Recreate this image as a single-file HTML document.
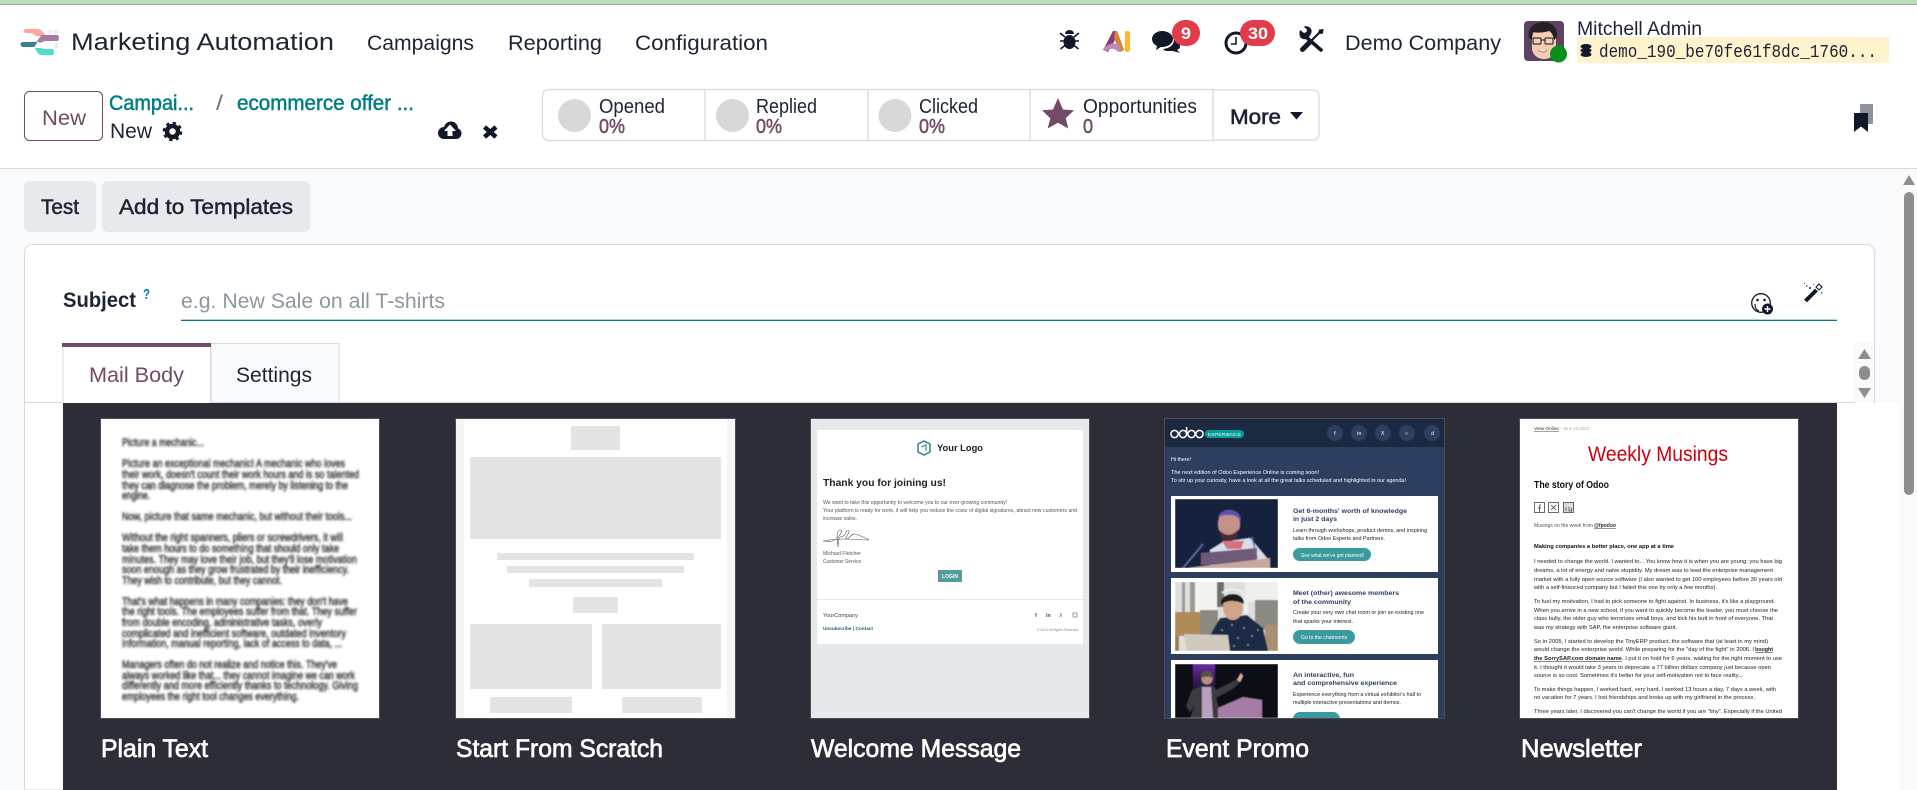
<!DOCTYPE html>
<html lang="en"><head><meta charset="utf-8"><title>Marketing Automation</title>
<style>
html,body{margin:0;padding:0;width:1917px;height:790px;overflow:hidden;background:#f9fafb}
svg{display:block}
text{font-family:"Liberation Sans",sans-serif;fill:#1d2433;white-space:pre}
.n{font-size:21.5px}
.sb{stroke:#1d2433;stroke-width:.5}
.lab{font-size:25px;fill:#fff;stroke:#fff;stroke-width:.7}
.p{fill:#714B67}
.tl{fill:#017E84;stroke:#017E84;stroke-width:.5;font-size:21px}
.stl{font-size:20px}
.stv{font-size:20px;fill:#714B67;stroke:#714B67;stroke-width:.5}
.pt{font-size:11px;fill:#2a2a2a;stroke:#2a2a2a;stroke-width:.4}
.w{font-size:5px;fill:#555}
.e{font-size:5px;fill:#fff}
.c{font-size:5px;fill:#222}
.h{font-size:6px;fill:#2d3e5e;font-weight:700}
.m{font-size:5.3px;fill:#222}
</style></head><body>
<svg xmlns="http://www.w3.org/2000/svg" width="1917" height="790" viewBox="0 0 1917 790">
<defs>
<filter id="b1" x="-5%" y="-5%" width="110%" height="110%"><feGaussianBlur stdDeviation="1.1"/></filter>
<filter id="b2" x="-5%" y="-5%" width="110%" height="110%"><feGaussianBlur stdDeviation="0.35"/></filter>
<filter id="b3" x="-5%" y="-5%" width="110%" height="110%"><feGaussianBlur stdDeviation="0.6"/></filter>
<clipPath id="c3"><rect x="811" y="419" width="278" height="299"/></clipPath>
<clipPath id="c4"><rect x="1165" y="419" width="279" height="299"/></clipPath>
<clipPath id="c5"><rect x="1520" y="419" width="278" height="299"/></clipPath>
<clipPath id="pa"><rect x="1175" y="499" width="103" height="69"/></clipPath>
<clipPath id="pb"><rect x="1175" y="582" width="103" height="69"/></clipPath>
<clipPath id="pc"><rect x="1175" y="664" width="103" height="54"/></clipPath>
<linearGradient id="beam" x1="0" y1="0" x2="0" y2="1"><stop offset="0" stop-color="#6b2fa0"/><stop offset="1" stop-color="#0a0718"/></linearGradient>
</defs>

<!-- page / header -->
<rect width="1917" height="790" fill="#f9fafb"/>
<rect width="1917" height="168" fill="#fff"/>
<rect width="1917" height="4" fill="#bfdcbf"/>
<rect y="4" width="1917" height="1" fill="#8fb096"/>
<rect y="168" width="1917" height="1" fill="#d8dadd"/>

<!-- logo -->
<g fill="#eee"><rect x="48" y="30" width="4" height="4"/><rect x="54" y="30" width="4" height="4"/><rect x="54" y="44" width="4" height="4"/><rect x="54" y="37" width="4" height="4" fill="#e8e0e8"/></g>
<path d="M25 29h12q4 0 6 3l3 4h-8q-3 0-5-2l-1-1H25q-2-2 0-4z" fill="#ffa4a6"/>
<path d="M42 35h16q2 3 0 6H45l-5 2-3-2 3-4q1-2 2-2z" fill="#a97ca6"/>
<path d="M22 42h12q3 0 4-1l-3 5-1 1H22q-3-3 0-5z" fill="#38809a"/>
<path d="M35 48h6l2 1h10q2 3 0 6H42q-3 0-5-3z" fill="#4fdcc8"/>

<!-- navbar -->
<text x="71" y="50" style="font-size:24.5px" textLength="263" lengthAdjust="spacingAndGlyphs">Marketing Automation</text>
<text x="367" y="50" class="n" textLength="107" lengthAdjust="spacingAndGlyphs">Campaigns</text>
<text x="508" y="50" class="n" textLength="94" lengthAdjust="spacingAndGlyphs">Reporting</text>
<text x="635" y="50" class="n" textLength="133" lengthAdjust="spacingAndGlyphs">Configuration</text>

<!-- bug -->
<g fill="#111827" stroke="#111827">
<ellipse cx="1069.5" cy="42" rx="6" ry="7" stroke="none"/><path d="M1065 34a4.5 4 0 0 1 9 0z" stroke="none"/>
<path d="M1060 33l5 4M1079 33l-5 4M1060 41h4M1079 41h-4M1060.5 49l5-4M1078.5 49l-5-4" fill="none" stroke-width="1.6"/>
</g>
<!-- AI -->
<path d="M1113 31h4l7 19-4 2-5-12-7 12-5-2z" fill="#8b3a7a"/>
<path d="M1115 31h2l7 19-4 2-6-14z" fill="#d8862c"/>
<path d="M1104 51q-1-3 2-5 8-5 14 0l1 5-3 1q-5-6-11-1z" fill="#bb8ab8"/>
<rect x="1125" y="31" width="5" height="21" rx="2" fill="#ffb932"/>
<!-- chat -->
<path d="M1162 31c6 0 11 3.5 11 8s-5 8-11 8l-1 0-5 3 1-4c-3-1.5-5-4-5-7 0-4.5 4.5-8 10-8z" fill="#111827"/>
<path d="M1174 40c4 1 6 3 6 6 0 2-1 3-3 4l3 3-7-2-6 0c-2 0-3-1-4-2 6-.5 11-4 11-9z" fill="#111827"/>
<rect x="1172" y="20" width="28" height="26" rx="13" fill="#e23b4a"/>
<text x="1181" y="39" style="font-size:17px;font-weight:700;fill:#fff" textLength="10" lengthAdjust="spacingAndGlyphs">9</text>
<!-- clock -->
<circle cx="1236" cy="43" r="10" fill="none" stroke="#111827" stroke-width="3"/>
<path d="M1236 37v7h-5" fill="none" stroke="#111827" stroke-width="1.6"/>
<rect x="1240" y="20" width="35" height="26" rx="13" fill="#e23b4a"/>
<text x="1248" y="39" style="font-size:17px;font-weight:700;fill:#fff" textLength="20" lengthAdjust="spacingAndGlyphs">30</text>
<!-- tools: wrench + screwdriver -->
<g fill="#111827" stroke="#111827">
<path d="M1306 37l15 13" fill="none" stroke-width="3.6" stroke-linecap="round"/>
<path d="M1300 30l4 3 2.500-1 .5-2.500-3.500-3c4-1 7 .5 8 3.500.5 2-.5 4-1.500 5.500l-2.500 3c-2 1-4.500 1-6.500-.5-1.500-1.500-2-4.500-1-8z" stroke="none"/>
<path d="M1321 31l-10 10" fill="none" stroke-width="2.200"/>
<path d="M1319 29.500l4.500-.5-.5 4.500-2.500.5-2-2z" stroke="none"/>
<path d="M1310 42l-7.500 7.500" fill="none" stroke-width="5" stroke-linecap="round"/>
</g>
<text x="1345" y="50" class="n" textLength="156" lengthAdjust="spacingAndGlyphs">Demo Company</text>

<!-- avatar -->
<rect x="1524" y="21" width="40" height="40" rx="4" fill="#5e4360"/>
<path d="M1532 40c0-10 6-14 12-14s12 4 12 14v8c0 7-6 11-12 11s-12-4-12-11z" fill="#f2cdb0"/>
<path d="M1529 38c-2-9 4-16 14-16 9 0 15 5 14 15l-3 3c-1-6-3-8-5-9-6 2-13 2-16 1-1 2-1 5-1 8z" fill="#272126"/>
<g fill="none" stroke="#3b3335" stroke-width="1.2"><rect x="1533" y="38" width="8" height="6" rx="1"/><rect x="1545" y="38" width="8" height="6" rx="1"/><path d="M1541 40h4"/></g>
<path d="M1538 50q5 4 9 0" fill="#fff" stroke="#8a4a4a" stroke-width=".8"/>
<circle cx="1558.5" cy="54" r="8.5" fill="#058f1d"/>
<text x="1577" y="35" style="font-size:19.5px" textLength="125" lengthAdjust="spacingAndGlyphs">Mitchell Admin</text>
<rect x="1577" y="37" width="312" height="26" fill="#fff3cd"/>
<g fill="#111827"><ellipse cx="1586" cy="46.5" rx="5.5" ry="2.500"/><ellipse cx="1586" cy="50.5" rx="5.5" ry="2.500"/><ellipse cx="1586" cy="54.5" rx="5.5" ry="2.500"/></g>
<text x="1599" y="57" style="font-family:'Liberation Mono',monospace;font-size:18.5px" textLength="278" lengthAdjust="spacingAndGlyphs">demo_190_be70fe61f8dc_1760...</text>

<!-- control panel -->
<rect x="24.5" y="91.5" width="78" height="49" rx="5" fill="#fff" stroke="#714B67"/>
<text x="42" y="125" class="n p" textLength="44" lengthAdjust="spacingAndGlyphs">New</text>
<text x="109" y="110" class="tl" textLength="85" lengthAdjust="spacingAndGlyphs">Campai...</text>
<text x="216" y="110" style="font-size:21px;fill:#6b7280" textLength="7" lengthAdjust="spacingAndGlyphs">/</text>
<text x="237" y="110" class="tl" textLength="177" lengthAdjust="spacingAndGlyphs">ecommerce offer ...</text>
<text x="110" y="138" class="n" textLength="42" lengthAdjust="spacingAndGlyphs">New</text>
<circle cx="172.5" cy="131.5" r="5.5" fill="none" stroke="#111827" stroke-width="4.5"/>
<circle cx="172.5" cy="131.5" r="8.7" fill="none" stroke="#111827" stroke-width="2.2" stroke-dasharray="3.300 3.530"/>
<g fill="#111827"><circle cx="444" cy="133" r="6"/><circle cx="451" cy="128.5" r="7"/><circle cx="456" cy="133.5" r="5.5"/><rect x="444" y="131" width="12" height="8"/></g>
<path d="M450 124.5l6 6.5h-3.500v5h-5v-5H444z" fill="#fff"/>
<path d="M484.5 127l11.5 10M496 127l-11.500 10" stroke="#111827" stroke-width="4.5" fill="none"/>

<path d="M1213 90h100a6 6 0 0 1 6 6v38a6 6 0 0 1-6 6h-100z" fill="#fff" stroke="#d8dadd" stroke-width="1.3"/>
<path d="M1213 89.5H548.5a6 6 0 0 0-6 6v39a6 6 0 0 0 6 6H1213z" fill="#fff" stroke="#d8dadd" stroke-width="1.3"/>
<path d="M705 90v50M868 90v50M1030 90v50" stroke="#d8dadd" stroke-width="1.3" fill="none"/>
<g fill="#d8d8d8"><circle cx="574.5" cy="115.5" r="16.5"/><circle cx="732.5" cy="115.5" r="16.5"/><circle cx="895" cy="115.5" r="16.5"/></g>
<text x="599" y="113" class="stl" textLength="66" lengthAdjust="spacingAndGlyphs">Opened</text>
<text x="599" y="133" class="stv" textLength="26" lengthAdjust="spacingAndGlyphs">0%</text>
<text x="756" y="113" class="stl" textLength="61" lengthAdjust="spacingAndGlyphs">Replied</text>
<text x="756" y="133" class="stv" textLength="26" lengthAdjust="spacingAndGlyphs">0%</text>
<text x="919" y="113" class="stl" textLength="59" lengthAdjust="spacingAndGlyphs">Clicked</text>
<text x="919" y="133" class="stv" textLength="26" lengthAdjust="spacingAndGlyphs">0%</text>
<path d="M1058 98l5 11.5 11 .8-8.300 8 2.600 10.200-10.300-5.800-10.300 5.800 2.600-10.200-8.300-8 11-.8z" fill="#714B67"/>
<text x="1083" y="113" class="stl" textLength="114" lengthAdjust="spacingAndGlyphs">Opportunities</text>
<text x="1083" y="133" class="stv" textLength="10" lengthAdjust="spacingAndGlyphs">0</text>
<text x="1230" y="124" class="n sb" textLength="51" lengthAdjust="spacingAndGlyphs" style="stroke-width:.6">More</text>
<path d="M1290 112h13l-6.500 7.500z" fill="#111827"/>
<path d="M1860 104h13v20h-5v-11h-8z" fill="#8e9299"/>
<path d="M1854 113h14v19l-7-5.500-7 5.500z" fill="#111827"/>

<!-- action buttons -->
<rect x="24" y="181" width="72" height="51" rx="6" fill="#e7e9ed"/>
<text x="41" y="214" class="n sb" textLength="38" lengthAdjust="spacingAndGlyphs">Test</text>
<rect x="102" y="181" width="208" height="51" rx="6" fill="#e7e9ed"/>
<text x="119" y="214" class="n sb" textLength="174" lengthAdjust="spacingAndGlyphs">Add to Templates</text>

<!-- card -->
<path d="M24.5 790V252.5a8 8 0 0 1 8-8H1866.500a8 8 0 0 1 8 8V790z" fill="#fff" stroke="#d8dadd"/>
<text x="63" y="307" class="n" textLength="73" lengthAdjust="spacingAndGlyphs" style="font-weight:700">Subject</text>
<text x="143" y="299" style="font-size:15px;font-weight:700;fill:#0180a5" textLength="7" lengthAdjust="spacingAndGlyphs">?</text>
<text x="181" y="308" style="font-size:21.5px;fill:#8f969e" textLength="264" lengthAdjust="spacingAndGlyphs">e.g. New Sale on all T-shirts</text>
<rect x="181" y="319.7" width="1656" height="1.300" fill="#0b7a78"/>

<!-- emoji + wand -->
<circle cx="1761" cy="303" r="9.3" fill="#fff" stroke="#111827" stroke-width="1.3"/>
<circle cx="1757.5" cy="300" r="1.3" fill="#111827"/><circle cx="1764.5" cy="300" r="1.3" fill="#111827"/>
<path d="M1755 304q0 6 4 7" fill="none" stroke="#111827" stroke-width="1.2"/>
<circle cx="1767.5" cy="309" r="5.5" fill="#111827"/><path d="M1764.5 309h6M1767.5 306v6" stroke="#fff" stroke-width="1.4"/>
<path d="M1805.5 301l11-11" stroke="#111827" stroke-width="4"/><path d="M1816.5 290l4-4" stroke="#fff" stroke-width="2.6"/><path d="M1816 287l3-3 3 3-3 3z" fill="none" stroke="#111827" stroke-width="1.1"/>
<g fill="#1b6fa5"><rect x="1806" y="285" width="1.5" height="1.5"/><rect x="1809" y="287" width="2" height="2"/><rect x="1804" y="283" width="1" height="1"/><rect x="1821" y="292" width="1.5" height="1.5"/><rect x="1813" y="284" width="1" height="1"/></g>

<!-- tabs -->
<rect x="25" y="402" width="1830" height="1" fill="#d8dadd"/>
<rect x="211" y="343.5" width="128" height="59" fill="#f9fafb" stroke="#d8dadd"/>
<rect x="63" y="344" width="147.5" height="59" fill="#fff" stroke="#d8dadd"/>
<rect x="64" y="400" width="146" height="4" fill="#fff"/>
<rect x="62" y="343" width="149" height="4" fill="#714B67"/>
<text x="89" y="382" class="n p" textLength="95" lengthAdjust="spacingAndGlyphs">Mail Body</text>
<text x="236" y="382" class="n" textLength="76" lengthAdjust="spacingAndGlyphs">Settings</text>

<!-- white area right of the panel + inner scrollbar -->
<rect x="1837" y="403" width="63" height="387" fill="#fff"/>
<rect x="1855" y="343" width="19" height="60" fill="#fafafa"/>
<path d="M1858 359l6.5-10 6.500 10z" fill="#8e8e8e"/>
<rect x="1859" y="366" width="11" height="14" rx="5.5" fill="#8e8e8e"/>
<path d="M1858 388l6.5 10 6.500-10z" fill="#8e8e8e"/>

<!-- dark panel -->
<rect x="63" y="403" width="1774" height="387" fill="#2c2d36"/>

<!-- Thumb 1 -->
<rect x="101" y="419" width="278" height="299" fill="#fff"/>
<g filter="url(#b1)">
<text x="122" y="446" class="pt" textLength="82" lengthAdjust="spacingAndGlyphs">Picture a mechanic...</text>
<text x="122" y="467" class="pt" textLength="223" lengthAdjust="spacingAndGlyphs">Picture an exceptional mechanic! A mechanic who loves</text>
<text x="122" y="478" class="pt" textLength="237" lengthAdjust="spacingAndGlyphs">their work, doesn't count their work hours and is so talented</text>
<text x="122" y="489" class="pt" textLength="226" lengthAdjust="spacingAndGlyphs">they can diagnose the problem, merely by listening to the</text>
<text x="122" y="499" class="pt" textLength="28" lengthAdjust="spacingAndGlyphs">engine.</text>
<text x="122" y="520" class="pt" textLength="230" lengthAdjust="spacingAndGlyphs">Now, picture that same mechanic, but without their tools...</text>
<text x="122" y="541" class="pt" textLength="221" lengthAdjust="spacingAndGlyphs">Without the right spanners, pliers or screwdrivers, it will</text>
<text x="122" y="552" class="pt" textLength="217" lengthAdjust="spacingAndGlyphs">take them hours to do something that should only take</text>
<text x="122" y="563" class="pt" textLength="235" lengthAdjust="spacingAndGlyphs">minutes. They may love their job, but they'll lose motivation</text>
<text x="122" y="573" class="pt" textLength="227" lengthAdjust="spacingAndGlyphs">soon enough as they grow frustrated by their inefficiency.</text>
<text x="122" y="584" class="pt" textLength="160" lengthAdjust="spacingAndGlyphs">They wish to contribute, but they cannot.</text>
<text x="122" y="605" class="pt" textLength="226" lengthAdjust="spacingAndGlyphs">That's what happens in many companies: they don't have</text>
<text x="122" y="615" class="pt" textLength="235" lengthAdjust="spacingAndGlyphs">the right tools. The employees suffer from that. They suffer</text>
<text x="122" y="626" class="pt" textLength="200" lengthAdjust="spacingAndGlyphs">from double encoding, administrative tasks, overly</text>
<text x="122" y="637" class="pt" textLength="224" lengthAdjust="spacingAndGlyphs">complicated and inefficient software, outdated inventory</text>
<text x="122" y="647" class="pt" textLength="220" lengthAdjust="spacingAndGlyphs">information, manual reporting, lack of access to data, ...</text>
<text x="122" y="668" class="pt" textLength="215" lengthAdjust="spacingAndGlyphs">Managers often do not realize and notice this. They've</text>
<text x="122" y="679" class="pt" textLength="233" lengthAdjust="spacingAndGlyphs">always worked like that... they cannot imagine we can work</text>
<text x="122" y="689" class="pt" textLength="236" lengthAdjust="spacingAndGlyphs">differently and more efficiently thanks to technology. Giving</text>
<text x="122" y="700" class="pt" textLength="177" lengthAdjust="spacingAndGlyphs">employees the right tool changes everything.</text>
</g>
<text x="101" y="757" class="lab" textLength="107" lengthAdjust="spacingAndGlyphs">Plain Text</text>

<!-- Thumb 2 -->
<rect x="456" y="419" width="279" height="299" fill="#fff"/>
<rect x="456" y="419" width="8" height="299" fill="#f5f5f5"/><rect x="727" y="419" width="8" height="299" fill="#f5f5f5"/>
<g fill="#e4e4e4">
<rect x="571" y="426" width="49" height="24"/><rect x="470" y="457" width="251" height="82"/>
<rect x="497" y="553" width="197" height="7"/><rect x="507" y="566" width="177" height="7"/><rect x="529" y="579" width="133" height="8"/>
<rect x="573" y="597" width="45" height="16"/><rect x="470" y="624" width="122" height="65"/><rect x="602" y="624" width="119" height="65"/>
<rect x="490" y="697" width="82" height="16"/><rect x="622" y="697" width="80" height="16"/>
</g>
<text x="456" y="757" class="lab" textLength="207" lengthAdjust="spacingAndGlyphs">Start From Scratch</text>

<!-- Thumb 3 -->
<g clip-path="url(#c3)">
<rect x="811" y="419" width="278" height="299" fill="#e6e9ec"/>
<rect x="817" y="430" width="266" height="214" fill="#fff"/>
<g filter="url(#b2)">
<path d="M924 441l6 3v8l-6 3-6-3v-8z" fill="none" stroke="#3e8f96" stroke-width="1.6"/><path d="M921 447l5-2v6" fill="none" stroke="#3e8f96" stroke-width="1.2"/>
<text x="937" y="451" style="font-size:9px;font-weight:700;fill:#222" textLength="46" lengthAdjust="spacingAndGlyphs">Your Logo</text>
<text x="823" y="486" style="font-size:10.5px;font-weight:700;fill:#222" textLength="123" lengthAdjust="spacingAndGlyphs">Thank you for joining us!</text>
<text x="823" y="504" class="w" textLength="184" lengthAdjust="spacingAndGlyphs">We want to take this opportunity to welcome you to our ever-growing community!</text>
<text x="823" y="512" class="w" textLength="254" lengthAdjust="spacingAndGlyphs">Your platform is ready for work, it will help you reduce the costs of digital signatures, attract new customers and</text>
<text x="823" y="520" class="w" textLength="34" lengthAdjust="spacingAndGlyphs">increase sales.</text>
<path d="M823 541c8 2 13-1 16-5 3-4 4-6 1-6-4 0-3 9-2 17 0-5 1-8 2-10 3 0 5-2 6-5 1-2 4-2 3 0-1 3-5 7-2 7 3-1 5-6 8-5 5 1 10 4 14 6-8 0-18-1-26-1-8 0-14 1-20 2z" fill="none" stroke="#555" stroke-width=".6"/>
<text x="823" y="555" class="w" textLength="38" lengthAdjust="spacingAndGlyphs">Michael Fletcher</text>
<text x="823" y="563" class="w" textLength="38" lengthAdjust="spacingAndGlyphs">Customer Service</text>
<rect x="938" y="570" width="24" height="12" fill="#559a9f"/>
<text x="942" y="578" style="font-size:5px;font-weight:700;fill:#fff" textLength="16" lengthAdjust="spacingAndGlyphs">LOGIN</text>
<rect x="817" y="599" width="266" height="1" fill="#e6e9ec"/>
<text x="823" y="617" style="font-size:5.3px;fill:#444" textLength="35" lengthAdjust="spacingAndGlyphs">YourCompany</text>
<text x="1035" y="617" style="font-size:5.3px;font-weight:700;fill:#1f5c66">f</text>
<text x="1046" y="617" style="font-size:5.3px;font-weight:700;fill:#1f5c66">in</text>
<text x="1059" y="617" style="font-size:5.3px;fill:#555">X</text>
<rect x="1073" y="613" width="4" height="4" fill="none" stroke="#777" stroke-width=".7"/>
<text x="823" y="630" style="font-size:4.8px;font-weight:700;fill:#1f5c66" textLength="50" lengthAdjust="spacingAndGlyphs">Unsubscribe | Contact</text>
<text x="1037" y="631" style="font-size:3.5px;fill:#888" textLength="41" lengthAdjust="spacingAndGlyphs">© 2023 All Rights Reserved</text>
</g>
</g>
<text x="811" y="757" class="lab" textLength="210" lengthAdjust="spacingAndGlyphs">Welcome Message</text>

<!-- Thumb 4 -->
<g clip-path="url(#c4)">
<rect x="1165" y="419" width="279" height="299" fill="#2d3e5e"/>
<rect x="1165" y="419" width="279" height="28" fill="#1b2a41"/>
<g fill="none" stroke="#fff" stroke-width="1.5" filter="url(#b2)"><circle cx="1174.5" cy="434" r="3.6"/><circle cx="1183" cy="434" r="3.6"/><circle cx="1191.5" cy="434" r="3.6"/><circle cx="1199.5" cy="434" r="3.6"/><path d="M1186.6 434v-7"/></g>
<rect x="1205" y="430" width="39" height="8" rx="4" fill="#0a9a9a"/>
<text x="1208" y="436" style="font-size:4.5px;fill:#dff" textLength="33" lengthAdjust="spacingAndGlyphs">EXPERIENCE</text>
<g fill="#2e3f60"><circle cx="1335" cy="433" r="8"/><circle cx="1359" cy="433" r="8"/><circle cx="1383" cy="433" r="8"/><circle cx="1407" cy="433" r="8"/><circle cx="1432" cy="433" r="8"/></g>
<g style="font-size:5px;font-weight:700" filter="url(#b2)"><text x="1334" y="435" style="fill:#ccd">f</text><text x="1357" y="435" style="fill:#ccd">in</text><text x="1381" y="435" style="fill:#ccd">X</text><text x="1405" y="435" style="fill:#889">o</text><text x="1431" y="435" style="fill:#ccd">d</text></g>
<g filter="url(#b2)">
<text x="1171" y="461" class="e" textLength="20" lengthAdjust="spacingAndGlyphs">Hi there!</text>
<text x="1171" y="474" class="e" textLength="148" lengthAdjust="spacingAndGlyphs">The next edition of Odoo Experience Online is coming soon!</text>
<text x="1171" y="482" class="e" textLength="235" lengthAdjust="spacingAndGlyphs">To stir up your curiosity, have a look at all the great talks scheduled and highlighted in our agenda!</text>
</g>
<g fill="#fff"><rect x="1171" y="496" width="267" height="76"/><rect x="1171" y="578" width="267" height="76"/><rect x="1171" y="660" width="267" height="70"/></g>

<!-- photo 1 -->
<g clip-path="url(#pa)"><g filter="url(#b3)">
<rect x="1175" y="499" width="103" height="69" fill="#15233d"/>
<path d="M1210 550l13-8 27-4 17 20v10h-57z" fill="#d7dfe8"/>
<path d="M1222 541h22l-3 8h-14z" fill="#d76f7f"/>
<ellipse cx="1229" cy="524" rx="11" ry="14" fill="#c4908a"/>
<path d="M1218 518c1-6 6-8 11-8 7 0 12 4 12 11-3-4-6-6-10-6-5 0-10 0-13 3z" fill="#5b52b0"/>
<path d="M1219 530q10 10 20-1l-2 9q-8 6-15 0z" fill="#4a2c38"/>
<path d="M1201 553l56-5v16l-56 1z" fill="#6c5a78"/>
<path d="M1187 568l83-10v10z" fill="#c9a7a0"/>
<path d="M1183 568l20-24M1257 558l-5-21" stroke="#6a6aa8" stroke-width="1.5" fill="none"/>
</g></g>
<!-- photo 2 -->
<g clip-path="url(#pb)"><g filter="url(#b3)">
<rect x="1175" y="582" width="103" height="69" fill="#dedfdc"/>
<path d="M1182 582h3v30h-3zM1190 582h5v30h-5z" fill="#9a9a94"/>
<rect x="1195" y="582" width="22" height="30" fill="#f2f2f0"/>
<rect x="1217" y="582" width="7" height="25" fill="#6f6f68"/>
<rect x="1245" y="582" width="33" height="20" fill="#efefec"/>
<rect x="1255" y="600" width="23" height="30" fill="#8b8b84"/>
<rect x="1200" y="610" width="18" height="28" fill="#8a8a80"/>
<rect x="1175" y="612" width="25" height="24" fill="#b08958"/><rect x="1175" y="636" width="4" height="15" fill="#a07a48"/><rect x="1195" y="636" width="4" height="15" fill="#a07a48"/>
<rect x="1265" y="625" width="13" height="26" fill="#a89070"/>
<path d="M1207 651l2-14 11-19 27-3 16 13 5 23z" fill="#1f2b45"/>
<g fill="#b8c0d0"><circle cx="1222" cy="630" r=".7"/><circle cx="1232" cy="625" r=".7"/><circle cx="1244" cy="628" r=".7"/><circle cx="1252" cy="636" r=".7"/><circle cx="1238" cy="638" r=".7"/><circle cx="1224" cy="642" r=".7"/><circle cx="1248" cy="645" r=".7"/><circle cx="1258" cy="630" r=".7"/><circle cx="1234" cy="646" r=".7"/></g>
<ellipse cx="1233" cy="608" rx="10" ry="12" fill="#d0a488"/>
<path d="M1221 605c-1-7 5-11 12-11s11 4 11 10c-4-2-8-3-12-3-4 0-8 1-11 4z" fill="#1b1a1d"/>
<path d="M1222 593q10-7 20-1l4 8" fill="none" stroke="#eee" stroke-width="2"/>
<rect x="1244" y="600" width="4" height="14" rx="2" fill="#eee"/>
<path d="M1184 634l44 1 2 16h-43z" fill="#cfc9c0"/>
</g></g>
<!-- photo 3 -->
<g clip-path="url(#pc)"><g filter="url(#b3)">
<rect x="1175" y="664" width="103" height="54" fill="#0a0718"/>
<rect x="1193" y="664" width="22" height="32" fill="url(#beam)"/>
<path d="M1186 706l6-16 9-4h12l3 4 20-10 4-4 2 4-8 8-18 10 5 17-5 3h-26l5-13-5 7z" fill="#3a3a40"/>
<path d="M1202 687h9l2 31h-11z" fill="#b8a0c0"/>
<circle cx="1207" cy="679" r="5.5" fill="#b8907e"/><path d="M1201 678q0-7 6-7t6 7q-6-3-12 0z" fill="#554"/>
<path d="M1237 680l4-7 2 3-3 6z" fill="#d8b0a0"/>
<path d="M1218 708l25-11 19 3v18h-44z" fill="#a57ba5"/>
</g></g>

<g filter="url(#b2)">
<text x="1293" y="513" class="h" textLength="114" lengthAdjust="spacingAndGlyphs">Get 6-months' worth of knowledge</text>
<text x="1293" y="521" class="h" textLength="44" lengthAdjust="spacingAndGlyphs">in just 2 days</text>
<text x="1293" y="532" class="c" textLength="134" lengthAdjust="spacingAndGlyphs">Learn through workshops, product demos, and inspiring</text>
<text x="1293" y="540" class="c" textLength="92" lengthAdjust="spacingAndGlyphs">talks from Odoo Experts and Partners.</text>
<rect x="1293" y="548" width="78" height="13" rx="6.5" fill="#3b9a9e"/>
<text x="1301" y="557" class="e" textLength="63" lengthAdjust="spacingAndGlyphs">See what we've got planned!</text>
<text x="1293" y="595" class="h" textLength="106" lengthAdjust="spacingAndGlyphs">Meet (other) awesome members</text>
<text x="1293" y="604" class="h" textLength="58" lengthAdjust="spacingAndGlyphs">of the community</text>
<text x="1293" y="614" class="c" textLength="131" lengthAdjust="spacingAndGlyphs">Create your very own chat room or join an existing one</text>
<text x="1293" y="623" class="c" textLength="60" lengthAdjust="spacingAndGlyphs">that sparks your interest.</text>
<rect x="1293" y="630" width="62" height="14" rx="7" fill="#3b9a9e"/>
<text x="1301" y="639" class="e" textLength="46" lengthAdjust="spacingAndGlyphs">Go to the chatrooms</text>
<text x="1293" y="677" class="h" textLength="61" lengthAdjust="spacingAndGlyphs">An interactive, fun</text>
<text x="1293" y="685" class="h" textLength="104" lengthAdjust="spacingAndGlyphs">and comprehensive experience</text>
<text x="1293" y="696" class="c" textLength="128" lengthAdjust="spacingAndGlyphs">Experience everything from a virtual exhibitor's hall to</text>
<text x="1293" y="704" class="c" textLength="108" lengthAdjust="spacingAndGlyphs">multiple interactive presentations and demos.</text>
<rect x="1293" y="712" width="47" height="14" rx="7" fill="#3b9a9e"/>
</g>
</g>
<text x="1166" y="757" class="lab" textLength="143" lengthAdjust="spacingAndGlyphs">Event Promo</text>

<!-- Thumb 5 -->
<g clip-path="url(#c5)">
<rect x="1520" y="419" width="278" height="299" fill="#fff"/>
<g filter="url(#b2)">
<text x="1534" y="430" style="font-size:4.5px;fill:#333;text-decoration:underline" textLength="25" lengthAdjust="spacingAndGlyphs">View Online</text>
<text x="1560" y="430" style="font-size:4.5px;fill:#aaa" textLength="29" lengthAdjust="spacingAndGlyphs">- June 22 2023</text>
<text x="1534" y="488" style="font-size:10.5px;font-weight:700;fill:#111" textLength="75" lengthAdjust="spacingAndGlyphs">The story of Odoo</text>
<g fill="none" stroke="#444" stroke-width=".8"><rect x="1534.5" y="502.5" width="10" height="10"/><rect x="1548.5" y="502.5" width="10" height="10"/><rect x="1563.5" y="502.5" width="10" height="10" fill="#ddd"/><path d="M1541 505h-1.500v7M1538 508h3M1551 505l5 5M1556 505l-5 5M1566 507v4M1569 507v4h2.500v-3"/></g>
<text x="1534" y="527" style="font-size:5px;fill:#555" textLength="59" lengthAdjust="spacingAndGlyphs">Musings on the week from</text>
<text x="1594" y="527" style="font-size:5px;font-weight:700;fill:#333;text-decoration:underline" textLength="22" lengthAdjust="spacingAndGlyphs">@fpodoo</text>
<text x="1534" y="548" style="font-size:5.5px;font-weight:700;fill:#111" textLength="140" lengthAdjust="spacingAndGlyphs">Making companies a better place, one app at a time</text>
<text x="1534" y="563" class="m" textLength="248" lengthAdjust="spacingAndGlyphs">I needed to change the world. I wanted to... You know how it is when you are young; you have big</text>
<text x="1534" y="572" class="m" textLength="239" lengthAdjust="spacingAndGlyphs">dreams, a lot of energy and naive stupidity. My dream was to lead the enterprise management</text>
<text x="1534" y="581" class="m" textLength="248" lengthAdjust="spacingAndGlyphs">market with a fully open source software (I also wanted to get 100 employees before 30 years old</text>
<text x="1534" y="589" class="m" textLength="183" lengthAdjust="spacingAndGlyphs">with a self-financed company but I failed this one by only a few months).</text>
<text x="1534" y="603" class="m" textLength="241" lengthAdjust="spacingAndGlyphs">To fuel my motivation, I had to pick someone to fight against. In business, it's like a playground.</text>
<text x="1534" y="612" class="m" textLength="244" lengthAdjust="spacingAndGlyphs">When you arrive in a new school, if you want to quickly become the leader, you must choose the</text>
<text x="1534" y="620" class="m" textLength="239" lengthAdjust="spacingAndGlyphs">class bully, the older guy who terrorizes small boys, and kick his butt in front of everyone. That</text>
<text x="1534" y="629" class="m" textLength="143" lengthAdjust="spacingAndGlyphs">was my strategy with SAP, the enterprise software giant.</text>
<text x="1534" y="643" class="m" textLength="234" lengthAdjust="spacingAndGlyphs">So in 2005, I started to develop the TinyERP product, the software that (at least in my mind)</text>
<text x="1534" y="651" class="m" textLength="220" lengthAdjust="spacingAndGlyphs">would change the enterprise world. While preparing for the "day of the fight" in 2006, I</text>
<text x="1755" y="651" class="m" style="font-weight:700;text-decoration:underline" textLength="18" lengthAdjust="spacingAndGlyphs">bought</text>
<text x="1534" y="660" class="m" style="font-weight:700;text-decoration:underline" textLength="88" lengthAdjust="spacingAndGlyphs">the SorrySAP.com domain name</text>
<text x="1622" y="660" class="m" textLength="160" lengthAdjust="spacingAndGlyphs">. I put it on hold for 6 years, waiting for the right moment to use</text>
<text x="1534" y="669" class="m" textLength="237" lengthAdjust="spacingAndGlyphs">it. I thought it would take 3 years to deprecate a 77 billion dollars company just because open</text>
<text x="1534" y="677" class="m" textLength="209" lengthAdjust="spacingAndGlyphs">source is so cool. Sometimes it's better for your self-motivation not to face reality...</text>
<text x="1534" y="691" class="m" textLength="242" lengthAdjust="spacingAndGlyphs">To make things happen, I worked hard, very hard. I worked 13 hours a day, 7 days a week, with</text>
<text x="1534" y="699" class="m" textLength="221" lengthAdjust="spacingAndGlyphs">no vacation for 7 years. I lost friendships and broke up with my girlfriend in the process.</text>
<text x="1534" y="713" class="m" textLength="248" lengthAdjust="spacingAndGlyphs">Three years later, I discovered you can't change the world if you are "tiny". Especially if the United</text>
</g>
<text x="1588" y="461" style="font-size:21px;fill:#cc0010" textLength="140" lengthAdjust="spacingAndGlyphs">Weekly Musings</text>
</g>
<text x="1521" y="757" class="lab" textLength="121" lengthAdjust="spacingAndGlyphs">Newsletter</text>

<!-- thumb borders -->
<g fill="none" stroke="#4b4c55"><rect x="100.5" y="418.5" width="279" height="300"/><rect x="455.5" y="418.5" width="280" height="300"/><rect x="810.5" y="418.5" width="279" height="300"/><rect x="1164.5" y="418.5" width="280" height="300"/><rect x="1519.5" y="418.5" width="279" height="300"/></g>

<!-- main scrollbar -->
<rect x="1900" y="169" width="17" height="621" fill="#fafafa"/>
<path d="M1903 185l6-10 6 10z" fill="#8e8e8e"/>
<rect x="1904" y="192" width="10" height="303" rx="5" fill="#8e8e8e"/>
</svg>
</body></html>
